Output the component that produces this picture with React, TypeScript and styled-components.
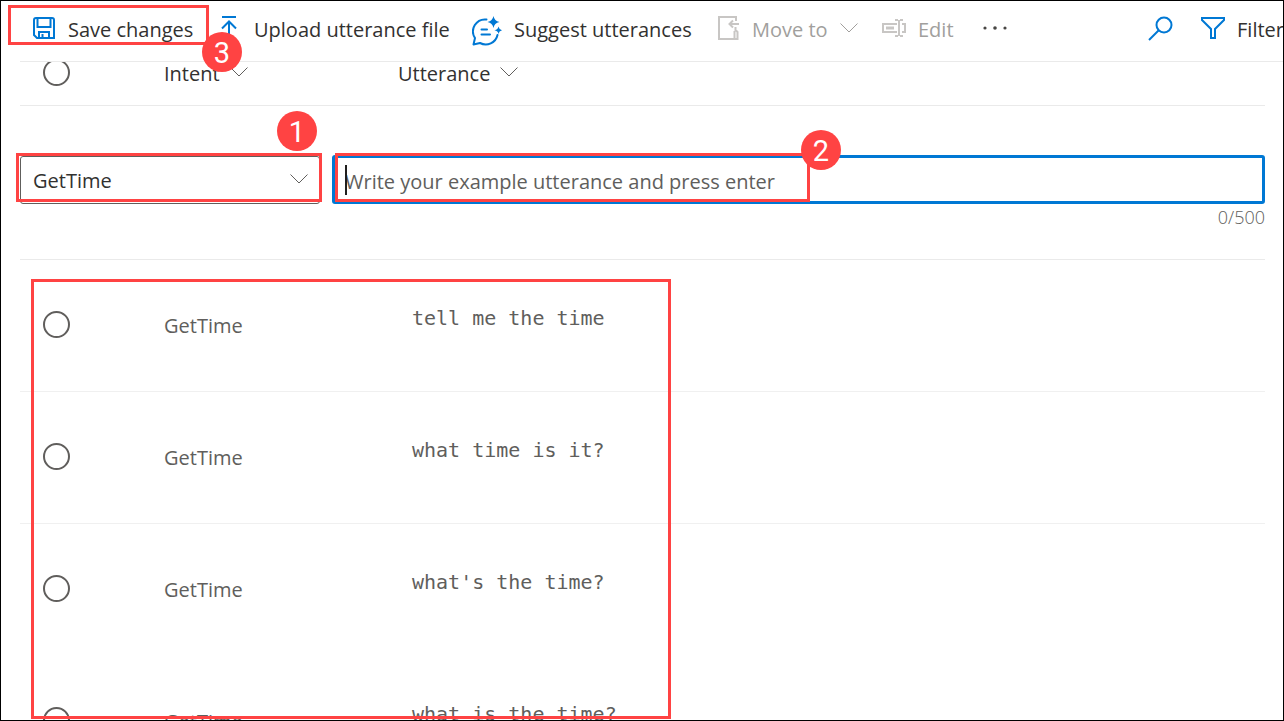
import React from "react";
import styled, { createGlobalStyle } from "styled-components";

const blue = "#0078d4";
const red = "#ff4343";

const GlobalStyle = createGlobalStyle`
  * { box-sizing: border-box; }
  body {
    margin: 0;
    background: #fff;
    font-family: "Open Sans", "Noto Sans", sans-serif;
    font-size: 20px;
    line-height: 28px;
    color: #323130;
  }
  button, input, select { font: inherit; color: inherit; }
`;

const Frame = styled.div`
  position: relative;
  height: 100vh;
  border: 1px solid #000;
  overflow: hidden;
  display: flex;
  flex-direction: column;
`;

const Toolbar = styled.header`
  display: flex;
  align-items: center;
  flex: none;
  height: 61px;
  margin-left: 19px;
  padding: 0 0 2px 12px;
  border-bottom: 1px solid #eaeaea;
`;

const Command = styled.button<{ $width?: number; $gap?: number }>`
  display: flex;
  align-items: center;
  flex: none;
  gap: ${(p) => p.$gap ?? 12}px;
  width: ${(p) => (p.$width ? `${p.$width}px` : "auto")};
  padding: 0;
  border: 0;
  background: none;
  white-space: nowrap;
  &:disabled { color: #a19f9d; }
  svg { flex: none; display: block; margin-bottom: 4px; }
`;

const FarCommands = styled.div`
  display: flex;
  flex: none;
  gap: 28px;
  margin-left: auto;
  margin-right: -1px;
`;

const Scroller = styled.main`
  flex: 1;
  min-height: 0;
  overflow: hidden;
  padding: 0 18px 0 19px;
`;

const Table = styled.table`
  width: 100%;
  margin-top: -22px;
  table-layout: fixed;
  border-collapse: separate;
  border-spacing: 0;
`;

const HeadCell = styled.th<{ $width?: number }>`
  width: ${(p) => (p.$width ? `${p.$width}px` : "auto")};
  height: 66px;
  padding: 0;
  border-bottom: 1px solid #eaeaea;
  text-align: left;
  vertical-align: middle;
  font-weight: 500;
`;

const SortButton = styled.button`
  display: flex;
  align-items: center;
  gap: 10px;
  padding: 2px 0 0;
  border: 0;
  background: none;
  font-weight: 500;
  svg { margin-bottom: 4px; }
`;

const RoundCheck = styled.input`
  appearance: none;
  display: block;
  width: 27px;
  height: 27px;
  margin: 0 0 0 23px;
  border: 2px solid #605e5c;
  border-radius: 50%;
  background: #fff;
`;

const EntryCell = styled.td`
  height: 154px;
  padding: 49px 0 0;
  border-bottom: 1px solid #eaeaea;
  vertical-align: top;
`;

const EntryRow = styled.div`
  display: flex;
  gap: 12px;
`;

const SelectBox = styled.div`
  position: relative;
  flex: none;
  width: 300px;
  padding-top: 1px;
  svg {
    position: absolute;
    right: 12px;
    top: 19px;
    pointer-events: none;
  }
`;

const IntentSelect = styled.select`
  appearance: none;
  display: block;
  width: 100%;
  height: 48px;
  padding: 2px 12px 0;
  border: 1px solid #605e5c;
  border-radius: 3px;
  background: #fff;
`;

const UtteranceField = styled.div`
  position: relative;
  flex: 1;
`;

const UtteranceInput = styled.input`
  display: block;
  width: 100%;
  height: 49px;
  padding: 4px 10px 0;
  border: 3px solid ${blue};
  border-radius: 3px;
  outline: 0;
  background: #fff;
  &::placeholder { color: #605e5c; opacity: 1; }
`;

const Caret = styled.span`
  position: absolute;
  left: 13px;
  top: 10px;
  width: 2px;
  height: 30px;
  background: #201f1e;
`;

const Counter = styled.div`
  font-size: 18px;
  line-height: 26px;
  font-weight: 300;
  text-align: right;
  color: #605e5c;
`;

const Cell = styled.td<{ $line?: boolean; $top: number }>`
  height: 132px;
  padding: ${(p) => p.$top}px 0 0;
  border-bottom: 1px solid ${(p) => (p.$line ? "#f0f0f0" : "transparent")};
  vertical-align: top;
  color: #605e5c;
`;

const Utterance = styled.span`
  padding-left: 14px;
  font-family: "DejaVu Sans Mono", monospace;
  color: #605e5c;
`;

const Highlight = styled.div<{ $x: number; $y: number; $w: number; $h: number }>`
  position: absolute;
  left: ${(p) => p.$x}px;
  top: ${(p) => p.$y}px;
  width: ${(p) => p.$w}px;
  height: ${(p) => p.$h}px;
  border: 3px solid ${red};
  pointer-events: none;
`;

const Badge = styled.div<{ $x: number; $y: number }>`
  position: absolute;
  left: ${(p) => p.$x}px;
  top: ${(p) => p.$y}px;
  width: 40px;
  height: 40px;
  border-radius: 50%;
  background: ${red};
  color: #fff;
  font-family: Roboto, "Liberation Sans", sans-serif;
  font-size: 29px;
  line-height: 42px;
  text-align: center;
`;

const Chevron = ({ color = "#605e5c" }: { color?: string }) => (
  <svg width="18" height="10" viewBox="0 0 18 10" fill="none" stroke={color} aria-hidden="true">
    <path d="M.5 .5 9 9 17.5 .5" />
  </svg>
);

const SaveIcon = () => (
  <svg width="24" height="22" viewBox="-1 0 24 22" fill="none" stroke={blue} strokeWidth="2" aria-hidden="true">
    <path d="M3 1H19Q21 1 21 3V21H4L1 18V3Q1 1 3 1Z" />
    <path d="M4.500 1V10H17.500V1M6 21V15H16V21M9.500 17V21" />
  </svg>
);

const UploadIcon = () => (
  <svg width="20" height="24" viewBox="0 0 20 24" fill="none" stroke={blue} strokeWidth="2" aria-hidden="true">
    <path d="M3 1H17M10 24V5M3 12.500 10 5.500 17 12.500" />
  </svg>
);

const SuggestIcon = () => (
  <svg width="30" height="36" viewBox="0 -6 30 36" fill="none" stroke={blue} strokeWidth="2" aria-hidden="true">
    <path d="M14.500 3.500A12 12 0 0 0 3 22L1.500 28.500 8 27A12 12 0 0 0 25.500 19" strokeLinecap="round" strokeLinejoin="round" />
    <path d="M9.500 13.500H15M9.500 18.500H18" strokeLinecap="round" />
    <path d="M21.500 0Q22.300 4.800 27.500 6 22.300 7.200 21.500 12 20.500 7.200 15.500 6 20.500 4.800 21.500 0ZM26.500 10.500Q27 13.500 30 14.300 27 15 26.500 18 26 15 22.500 14.300 26 13.500 26.500 10.500Z" fill={blue} stroke="none" />
  </svg>
);

const MoveIcon = () => (
  <svg width="22" height="24" viewBox="0 0 22 24" fill="none" stroke="#c8c6c4" strokeWidth="2" aria-hidden="true">
    <path d="M18 5V1H1V23H17M11 8H21M15 4.500 11.500 8 15 11.500M17.500 11V15M16.500 15V23H19.500V16L17.500 14" />
  </svg>
);

const RenameIcon = () => (
  <svg width="24" height="18" viewBox="0 0 24 18" fill="none" stroke="#c8c6c4" strokeWidth="2" aria-hidden="true">
    <path d="M15 5H1V13H15M20 5H23V13H20M17 1V17M13 1H16M18 1H21M13 17H16M18 17H21" />
    <path d="M4 9H12" strokeWidth="3" />
  </svg>
);

const MoreIcon = () => (
  <svg width="24" height="4" viewBox="0 0 24 4" fill="#484644" aria-hidden="true">
    <circle cx="2" cy="2" r="1.600" />
    <circle cx="12" cy="2" r="1.800" />
    <circle cx="22" cy="2" r="1.600" />
  </svg>
);

const SearchIcon = () => (
  <svg width="25" height="25" viewBox="0 0 25 25" fill="none" stroke={blue} strokeWidth="2" aria-hidden="true">
    <circle cx="16" cy="9" r="7.500" />
    <path d="M10.500 14.500 1 24" />
  </svg>
);

const FilterIcon = () => (
  <svg width="24" height="24" viewBox="0 0 24 24" fill="none" stroke={blue} strokeWidth="2" aria-hidden="true">
    <path d="M1 2H23V4L14 13V22H10V13L1 4Z" />
  </svg>
);

const rows = [
  { intent: "GetTime", text: "tell me the time", line: true },
  { intent: "GetTime", text: "what time is it?", line: true },
  { intent: "GetTime", text: "what's the time?", line: false },
  { intent: "GetTime", text: "what is the time?", line: false },
];

export default function App() {
  return (
    <Frame>
      <GlobalStyle />
      <Toolbar>
        <Command $width={187}><SaveIcon />Save changes</Command>
        <Command $width={253} $gap={15}><UploadIcon />Upload utterance file</Command>
        <Command $width={246}><SuggestIcon />Suggest utterances</Command>
        <Command $width={164} disabled><MoveIcon />Move to<Chevron color="#a19f9d" /></Command>
        <Command $width={101} disabled><RenameIcon />Edit</Command>
        <Command aria-label="More commands"><MoreIcon /></Command>
        <FarCommands>
          <Command aria-label="Search"><SearchIcon /></Command>
          <Command><FilterIcon />Filter</Command>
        </FarCommands>
      </Toolbar>
      <Scroller>
        <Table>
          <thead>
            <tr>
              <HeadCell $width={144}><RoundCheck type="checkbox" aria-label="Select all" /></HeadCell>
              <HeadCell $width={234}><SortButton>Intent<Chevron /></SortButton></HeadCell>
              <HeadCell><SortButton>Utterance<Chevron /></SortButton></HeadCell>
            </tr>
          </thead>
          <tbody>
            <tr>
              <EntryCell colSpan={3}>
                <EntryRow>
                  <SelectBox>
                    <IntentSelect aria-label="Intent" defaultValue="GetTime">
                      <option>GetTime</option>
                    </IntentSelect>
                    <Chevron />
                  </SelectBox>
                  <UtteranceField>
                    <UtteranceInput
                      aria-label="Example utterance"
                      maxLength={500}
                      placeholder="Write your example utterance and press enter"
                    />
                    <Caret />
                    <Counter>0/500</Counter>
                  </UtteranceField>
                </EntryRow>
              </EntryCell>
            </tr>
            {rows.map((row) => (
              <tr key={row.text}>
                <Cell $line={row.line} $top={51}>
                  <RoundCheck type="checkbox" aria-label={row.text} />
                </Cell>
                <Cell $line={row.line} $top={52}>{row.intent}</Cell>
                <Cell $line={row.line} $top={44}><Utterance>{row.text}</Utterance></Cell>
              </tr>
            ))}
          </tbody>
        </Table>
      </Scroller>
      <Highlight $x={7} $y={4} $w={201} $h={40} />
      <Badge $x={201} $y={31}>3</Badge>
      <Highlight $x={15} $y={152} $w={306} $h={49} />
      <Badge $x={276} $y={110}>1</Badge>
      <Highlight $x={334} $y={152} $w={475} $h={49} />
      <Badge $x={800} $y={129}>2</Badge>
      <Highlight $x={30} $y={278} $w={640} $h={440} />
    </Frame>
  );
}
